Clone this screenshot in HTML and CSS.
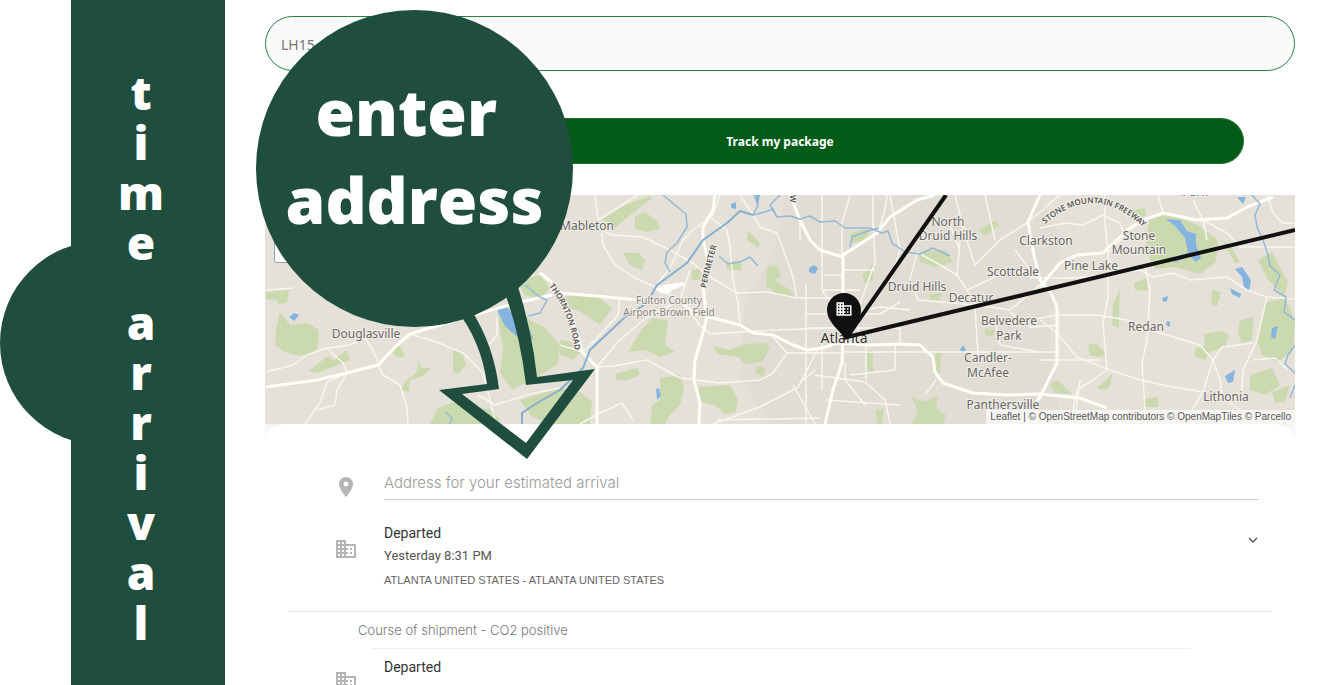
FILE: index.html
```html
<!DOCTYPE html>
<html lang="en">
<head>
  <meta charset="UTF-8" />
  <title>Time arrival | Track my package</title>
  <meta name="viewport" content="width=device-width, initial-scale=1.0" />
  <link rel="stylesheet" href="styles.css">
</head>
<body>

  <!-- Shared icons -->
  <svg class="icon-defs" aria-hidden="true">
    <symbol id="icon-building" viewBox="0 0 24 24">
      <path d="M12 7V3H2v18h20V7H12zM6 19H4v-2h2v2zm0-4H4v-2h2v2zm0-4H4V9h2v2zm0-4H4V5h2v2zm4 12H8v-2h2v2zm0-4H8v-2h2v2zm0-4H8V9h2v2zm0-4H8V5h2v2zm10 12h-8v-2h2v-2h-2v-2h2v-2h-2V9h8v10zm-2-8h-2v2h2v-2zm0 4h-2v2h2v-2z" />
    </symbol>
    <symbol id="icon-place" viewBox="0 0 24 24">
      <path d="M12 2C8.13 2 5 5.13 5 9c0 5.25 7 13 7 13s7-7.75 7-13c0-3.87-3.13-7-7-7zm0 9.5a2.5 2.5 0 0 1 0-5 2.5 2.5 0 0 1 0 5z" />
    </symbol>
  </svg>

  <div class="page">
    <!-- Vertical banner -->
    <aside class="banner">
      <div class="banner-bump"></div>
      <h1 class="banner-title">
        <span class="word"><span>t</span><span>i</span><span>m</span><span>e</span></span>
        <span class="word"><span>a</span><span>r</span><span>r</span><span>i</span><span>v</span><span>a</span><span>l</span></span>
      </h1>
    </aside>

    <main class="tracking">
      <form class="track-form">
        <input class="track-input" type="text" value="LH15" aria-label="Tracking number" />
        <button class="track-btn" type="button">Track my package</button>
      </form>

      <!-- Map -->
      <div class="map">
        <svg class="map-canvas" viewBox="265 195 1030 229" role="img" aria-label="Map of Atlanta">
          <rect class="land" x="265" y="195" width="1030" height="230" />

          <g class="city">
            <path d="M785 195H1040L1062 240L1050 330L1060 424H770L740 380L745 300L775 250Z" />
          </g>

          <g class="park">
            <path d="M266 292L289 290L287 303L278 304L276 300L266 299Z" />
            <path d="M280 312L290 325L307 323L319 330L318 347L310 356L295 355L285 352L275 345L276 330Z" />
            <path d="M309 371L328 356L334 360L346 350L350 360L330 368L318 373Z" />
            <path d="M393 348L400 346L405 355L400 358L394 355Z" />
            <path d="M405 382L417 372L418 360L422 368L431 368L423 376L410 380L409 392L401 390Z" />
            <path d="M453 350L462 352L466 365L458 374L453 372Z" />
            <path d="M430 424L437 409L452 402L470 408L490 409L500 420L480 424Z" />
            <path d="M498 308L515 303L530 320L545 328L560 345L558 364L540 375L512 390L500 372L503 350L500 330Z" />
            <path d="M520 400L560 388L580 392L592 402L590 424H548L530 415Z" />
            <path d="M515 280L540 275L550 288L540 300L525 295Z" />
            <path d="M565 296L598 297L612 308L600 325L590 318L578 310L566 308Z" />
            <path d="M560 340L572 342L580 352L574 360L560 355Z" />
            <path d="M602 219L625 205L650 196L652 198L630 215L615 228Z" />
            <path d="M635 217L645 212L658 222L660 229L646 232L635 228Z" />
            <path d="M623 253L638 253L645 260L642 270L630 265Z" />
            <path d="M640 332L652 318L668 320L665 345L675 352L660 357L645 350L628 352Z" />
            <path d="M615 374L637 368L640 375L628 380L617 380Z" />
            <path d="M660 378L680 375L684 388L680 405L670 415L665 424H650L652 405L660 400Z" />
            <path d="M698 387L730 385L738 400L736 412L725 414L715 405L700 402Z" />
            <path d="M713 346L730 350L745 344L765 343L770 348L762 362L745 364L738 357L718 354Z" />
            <path d="M756 366L765 368L764 377L756 373Z" />
            <path d="M767 267L777 265L781 276L775 280L790 290L796 298L780 296L766 286Z" />
            <path d="M725 262L740 260L742 270L728 270Z" />
            <path d="M748 230L760 243L758 248L747 240Z" />
            <path d="M692 270L701 268L700 280L692 280Z" />
            <path d="M850 233L870 228L865 240L852 243Z" />
            <path d="M918 252L945 250L953 262L935 267L920 262Z" />
            <path d="M978 230L995 221L999 225L985 236Z" />
            <path d="M862 275L873 263L873 280L865 284Z" />
            <path d="M929 294L942 293L940 300L930 300Z" />
            <path d="M866 350L873 350L873 372L866 370Z" />
            <path d="M934 355L941 350L940 375L934 370Z" />
            <path d="M912 397L925 402L938 395L936 408L946 415L944 424H912L918 412Z" />
            <path d="M876 410L884 408L882 424H877Z" />
            <path d="M1050 384L1058 380L1072 394L1055 393Z" />
            <path d="M985 328L995 330L992 337L985 335Z" />
            <path d="M1149 220L1165 215L1180 218L1198 225L1218 240L1216 262L1200 274L1175 267L1155 269L1145 250Z" />
            <path d="M1133 210L1145 208L1146 216L1138 218Z" />
            <path d="M1112 325L1113 305L1120 288L1119 318L1119 328Z" />
            <path d="M1134 283L1148 278L1147 291L1135 290Z" />
            <path d="M1088 345L1095 343L1105 352L1103 357L1090 356Z" />
            <path d="M1097 388L1113 373L1110 386L1105 390Z" />
            <path d="M1143 399L1158 397L1158 407L1144 407Z" />
            <path d="M1212 290L1221 292L1217 306L1211 304Z" />
            <path d="M1204 334L1222 331L1229 335L1225 347L1210 352L1205 360L1194 356L1196 348L1205 346Z" />
            <path d="M1240 320L1254 317L1252 340L1242 343L1238 333Z" />
            <path d="M1258 260L1272 252L1280 268L1288 282L1284 296L1268 280Z" />
            <path d="M1265 303L1285 298L1295 320L1293 350L1278 362L1262 355L1257 340Z" />
            <path d="M1250 375L1272 368L1280 385L1265 395L1250 390Z" />
            <path d="M1272 392L1290 385L1285 402L1275 403Z" />
            <path d="M1222 240L1232 248L1240 262L1235 263Z" />
          </g>

          <g class="lake">
            <path d="M289 317L294 313L299 315L294 321Z" />
            <path d="M497 310L506 306L515 317L528 326L533 338L528 344L515 335L505 326Z" />
            <path d="M656 389L659 388L661 396L657 400Z" />
            <path d="M731 204L736 202L736 209L731 208Z" />
            <path d="M755 195H760L758 205Z" />
            <path d="M809 268L814 265L818 268L815 274L809 272Z" />
            <path d="M960 350L963 345L966 350L962 353Z" />
            <path d="M1166 219L1180 220L1187 231L1196 234L1196 245L1201 258L1196 262L1190 256L1176 262L1165 260L1188 253L1185 238L1175 226Z" />
            <path d="M1235 269L1242 267L1251 280L1249 291L1244 287L1242 277Z" />
            <path d="M1230 288L1241 294L1240 298L1232 294Z" />
            <path d="M1162 298L1168 296L1167 301L1163 302Z" />
            <path d="M1167 321L1170 322L1170 327L1166 325Z" />
            <path d="M1272 328L1278 326L1275 339L1271 337Z" />
            <path d="M1225 376L1235 370L1233 382L1228 383Z" />
            <path d="M1237 197L1246 197L1243 204Z" />
          </g>

          <g class="road">
            <path d="M266 372L293 365L307 355L327 348L350 345L367 337" />
            <path d="M327 348L343 363L347 373L327 382L320 403L305 424M347 373L337 390L335 405L317 410" />
            <path d="M378 365L383 375L400 385L407 407L408 424M363 335L373 350L380 367" />
            <path d="M410 334L437 342L463 353L483 373L495 420M266 290L293 288" />
            <path d="M478 395L495 405L530 394L560 388M497 318L497 335L485 350" />
            <path d="M595 195L598 220L638 195M602 233L603 245L615 265L633 277L655 287L680 300" />
            <path d="M600 230L613 235L643 237L670 250L693 263L707 275L737 293L767 292L797 298L843 298" />
            <path d="M720 195L713 215L693 230L683 240L670 268L655 287" />
            <path d="M753 215L760 227L777 233L787 260L793 277L797 298" />
            <path d="M740 195L753 215M710 217L727 230L730 247L733 280L738 303L740 323" />
            <path d="M597 367L613 366L647 360L680 378L720 383L760 380L773 373L787 353L773 337" />
            <path d="M787 353H845M713 424L760 407L787 393L798 387L807 370L817 350" />
            <path d="M717 420L820 418M597 367L617 343L643 320L680 300M580 424L600 413L622 403L633 420" />
            <path d="M690 270L680 300L700 325L710 334L773 330L835 328M560 345L583 352L600 335L618 315L620 297" />
            <path d="M850 195L842 223V257M822 195V290L837 310M887 195L885 210L878 233" />
            <path d="M800 217V240M873 220L875 262L858 310M806 285V424M793 385L815 424" />
            <path d="M843 270H875M825 275H843M822 290H860M805 314H880L900 302M805 328H835" />
            <path d="M850 328H900V345M850 313L880 307L910 310M858 300L858 335M866 330V380" />
            <path d="M843 352H1060M822 337L822 390M815 375L865 382L885 400L890 424" />
            <path d="M845 363V380L865 405M800 383L815 370M826 400L900 405M850 375L895 370V345" />
            <path d="M890 195L900 250L890 280M873 195V230M917 252L910 280L918 300L975 305" />
            <path d="M917 252L940 265L957 275L967 290L975 305L978 355M960 240L957 275M950 225L960 250" />
            <path d="M975 265L1000 240L1027 223L1060 195M967 290L1010 270L1040 278M1015 250L1030 270" />
            <path d="M975 305L1010 310L1040 285M995 320L1000 345L1040 352M1010 312L1030 327L1060 325" />
            <path d="M955 195L965 235L975 265M985 195L995 240M936 380L925 395M1040 360H1100" />
            <path d="M1105 195V223L1108 253V297L1103 323L1107 370L1093 380L1077 390L1073 410" />
            <path d="M1040 228L1065 223L1083 225L1103 215L1120 223L1125 235L1108 253" />
            <path d="M1030 278H1077L1140 270L1153 277L1173 273L1190 280L1227 277L1247 290L1267 297L1295 299" />
            <path d="M1267 297L1257 340L1243 370L1242 390M1253 360L1275 358L1288 370" />
            <path d="M1020 325L1040 318L1057 315L1097 315L1127 320L1160 333L1200 345L1213 360L1220 380L1222 397" />
            <path d="M1213 360L1222 347L1253 343M1213 360L1203 392L1192 410" />
            <path d="M1040 320L1057 333L1077 357L1110 370L1140 380L1173 387L1203 392" />
            <path d="M1145 265L1150 290L1147 340L1142 363L1145 410M1080 380L1076 410" />
            <path d="M1203 220L1227 233L1240 247H1295M1267 195L1273 213L1283 223H1295" />
            <path d="M1193 200L1203 220L1207 240M1163 213L1158 195M1222 397L1240 410" />
          </g>

          <g class="road road-major">
            <path d="M266 387L317 380L347 373L378 365L397 345L410 334L463 318L517 303L560 293L597 296L637 300" />
            <path d="M540 273L553 283L570 313L583 353L597 367V424" />
            <path d="M680 300L693 313L713 318L740 325L753 333L773 335L793 345L807 350L823 348L837 343L870 345L900 344L920 345L933 357L935 372L943 383L973 393L1007 395L1040 394L1080 398L1107 408" />
            <path d="M715 195L713 210L703 227V240L708 260L703 287L707 317L703 333L695 360L694 380L700 403L699 424" />
            <path d="M790 195L800 220L810 240L820 250L843 257" />
            <path d="M935 195L917 200L890 217L877 233L843 255V337L842 363L833 390L825 424" />
            <path d="M1040 195L1028 222L1034 255L1040 280L1051 293L1057 307V363L1040 397L1030 410" />
            <path d="M1040 287L1060 263L1077 255L1103 253L1127 230L1143 220L1163 213L1197 220L1227 218L1247 207L1273 197" />
          </g>
          <path class="airport" d="M655 289L664 285L683 282L685 285L672 290L668 294L660 293Z" />

          <g class="river">
            <path class="river-wide" d="M753 215L740 211L727 223L703 240L687 263L657 285L647 303L625 317L590 350L583 368L560 390L537 403L522 413V424" />
            <path d="M753 215L765 212L773 209L777 217L790 216L800 219L810 216L820 222L835 221L845 228L870 228L882 233L888 231L892 243L905 252L920 254L933 248L950 256" />
            <path d="M663 195L675 205L686 214L687 227L677 243L667 252L665 263L670 272" />
            <path d="M719 256L728 264L740 262L750 257L758 266" />
            <path d="M754 195L758 205L753 215M777 217L770 205L780 195" />
            <path d="M850 247L852 237L865 232L879 228" />
            <path d="M525 285L540 297L547 300L540 313L528 316" />
            <path d="M445 412L452 418L450 424" />
            <path d="M1252 195L1260 204L1255 215L1257 227L1263 240L1268 255L1270 266L1280 275L1274 290L1286 297L1284 312L1295 320" />
            <path d="M1295 345L1288 355L1285 364L1295 373M1295 385L1290 398" />
          </g>

          <!-- place names -->
          <g class="label">
            <text x="587" y="230">Mableton</text>
            <text x="366" y="338">Douglasville</text>
            <text x="948" y="226">North</text>
            <text x="948" y="240">Druid Hills</text>
            <text x="917" y="291">Druid Hills</text>
            <text x="1013" y="276">Scottdale</text>
            <text x="1046" y="245">Clarkston</text>
            <text x="971" y="302">Decatur</text>
            <text x="1009" y="325">Belvedere</text>
            <text x="1009" y="340">Park</text>
            <text x="988" y="362">Candler-</text>
            <text x="988" y="377">McAfee</text>
            <text x="1003" y="409">Panthersville</text>
            <text x="1091" y="270">Pine Lake</text>
            <text x="1139" y="240">Stone</text>
            <text x="1139" y="254">Mountain</text>
            <text x="1146" y="331">Redan</text>
            <text x="1226" y="401">Lithonia</text>
            <text x="1195" y="196">Park</text>
            <text class="label-city" x="844" y="343">Atlanta</text>
          </g>
          <g class="label label-small">
            <text x="669" y="304">Fulton County</text>
            <text x="669" y="316">Airport-Brown Field</text>
          </g>
          <defs>
            <path id="thornton" d="M549 286Q571 315 575 352" />
            <path id="perimeter" d="M706 288Q709 272 717 245" />
            <path id="freeway" d="M1045 224Q1095 180 1145 229" />
          </defs>
          <g class="label-road">
            <text><textPath href="#thornton">THORNTON ROAD</textPath></text>
            <text><textPath href="#perimeter">PERIMETER</textPath></text>
            <text><textPath href="#freeway">STONE MOUNTAIN FREEWAY</textPath></text>
            <text x="195" y="-790" transform="rotate(90)">W</text>
          </g>

          <!-- route and marker -->
          <path class="route" d="M946 195L847 337L1295 230" />
          <path class="marker" d="M844 293C834 293 827 301 827 310C827 322 838 328 845 339C852 328 861 322 861 310C861 301 854 293 844 293Z" />
          <use class="marker-icon" href="#icon-building" x="835" y="300" width="18" height="18" />
        </svg>
        <div class="map-zoom"></div>
        <p class="attribution">
          <a href="#">Leaflet</a> | &copy; <a href="#">OpenStreetMap</a> contributors &copy; <a href="#">OpenMapTiles</a> &copy; <a href="#">Parcello</a>
        </p>
      </div>

      <!-- Shipment details -->
      <div class="sheet-wrap">
        <section class="sheet">
          <div class="row row-address">
            <svg class="row-icon"><use href="#icon-place" /></svg>
            <input class="address-input" type="text" placeholder="Address for your estimated arrival" aria-label="Address for your estimated arrival" />
          </div>

          <div class="row row-event">
            <svg class="row-icon"><use href="#icon-building" /></svg>
            <div class="event">
              <h2>Departed</h2>
              <p class="event-time">Yesterday 8:31 PM</p>
              <p class="event-place">ATLANTA UNITED STATES - ATLANTA UNITED STATES</p>
            </div>
            <button class="expand-btn" type="button" aria-label="Show details">
              <svg viewBox="0 0 10 6"><path d="M1 1L5 5L9 1" /></svg>
            </button>
          </div>

          <p class="course">Course of shipment - CO2 positive</p>

          <div class="row row-history">
            <svg class="row-icon"><use href="#icon-building" /></svg>
            <div class="event">
              <h2>Departed</h2>
            </div>
          </div>
        </section>
      </div>

      <!-- Callout bubble with arrow -->
      <div class="callout">
        <svg class="callout-shape" viewBox="256 10 340 450" aria-hidden="true">
          <circle cx="414.5" cy="168.5" r="158.5" />
          <path fill-rule="evenodd" d="M455 308Q481 340 487 384L439 390L527 459L595 369L537 377Q532 330 516 280L498 275Q519 325 526 385L573 380L526 443L462 394L499 389Q494 345 470 308Z" />
        </svg>
        <p class="callout-text">enter&nbsp;<br />address</p>
      </div>
    </main>
  </div>

</body>
</html>
```
FILE: styles.css
```css
* { box-sizing: border-box; }

body {
  margin: 0;
  background-color: white;
  font-family: Roboto, 'Liberation Sans', sans-serif;
  color: #333;
}

h1, h2, p {
  margin: 0;
}

.icon-defs {
  display: none;
}

.page {
  display: flex;
  height: 100vh;
  overflow: hidden;
  padding-left: 71px;
}

/* banner */
.banner {
  position: relative;
  flex: 0 0 154px;
  background-color: #204e3e;
  padding: 67px 14px 0 0;
}

.banner-bump {
  position: absolute;
  top: 241px;
  left: -71px;
  width: 204px;
  height: 204px;
  border-radius: 50%;
  background-color: #204e3e;
}

.banner-title {
  position: relative;
  display: flex;
  flex-direction: column;
  gap: 30px;
  color: white;
  font-family: 'Open Sans', sans-serif;
  font-size: 46px;
  font-weight: 800;
  line-height: 50px;
}

.word {
  display: flex;
  flex-direction: column;
  align-items: center;
}

/* tracking form */
.tracking {
  position: relative;
  flex: 1;
  min-width: 0;
  padding: 16px 49px 0 40px;
}

.track-form {
  display: flex;
  flex-direction: column;
}

.track-input {
  height: 55px;
  padding: 2px 15px 0;
  border: 1px solid #2c7d48;
  border-radius: 28px;
  background-color: #fafafa;
  color: #777;
  font-family: 'Noto Sans', sans-serif;
  font-size: 14px;
}

.track-btn {
  height: 46px;
  margin: 47px 51px 31px;
  border: 1px solid #1d6e2c;
  border-radius: 23px;
  background-color: #025c18;
  color: white;
  font-family: 'Noto Sans', sans-serif;
  font-size: 12px;
  font-weight: bold;
  cursor: pointer;
}

/* map */
.map {
  position: relative;
  overflow: hidden;
}

.map-canvas {
  display: block;
  width: 100%;
}

.land { fill: #e5e1d8; }
.city { fill: #e1ddd5; }
.park { fill: #cbd9af; }
.lake { fill: #86b4e0; }
.airport { fill: #fffefa; }

.road {
  fill: none;
  stroke: #f8f6ee;
  stroke-width: 1.5;
  stroke-linejoin: round;
}

.road-major {
  stroke: #fffef8;
  stroke-width: 3;
}

.river {
  fill: none;
  stroke: #94b8d6;
  stroke-width: 1.5;
  stroke-linejoin: round;
}

.river-wide {
  stroke: #86aed0;
  stroke-width: 2;
}

.label {
  fill: #666;
  stroke: #f1eee6;
  stroke-width: 2;
  paint-order: stroke;
  font-family: 'Noto Sans', sans-serif;
  font-size: 12px;
  text-anchor: middle;
}

.label-small {
  fill: #858585;
  font-size: 10px;
}

.label-city {
  fill: #333;
  font-size: 14px;
}

.label-road {
  fill: #555;
  stroke: #f1eee6;
  stroke-width: 2;
  paint-order: stroke;
  font-family: 'Noto Sans', sans-serif;
  font-size: 8px;
  font-weight: 600;
}

.route {
  fill: none;
  stroke: #111;
  stroke-width: 4;
}

.marker { fill: #111; }
.marker-icon { fill: white; }

.map-zoom {
  position: absolute;
  top: 40px;
  left: 9px;
  width: 28px;
  height: 28px;
  border: 1px solid #9aa0b4;
  border-radius: 3px;
  background-color: white;
}

.attribution {
  position: absolute;
  right: 0;
  bottom: 0;
  padding: 0 4px;
  background-color: rgba(255, 255, 255, 0.7);
  color: #555;
  font-family: 'Liberation Sans', sans-serif;
  font-size: 10px;
  line-height: 14px;
}

.attribution a {
  color: inherit;
  text-decoration: none;
}

/* shipment details */
.sheet-wrap {
  background: linear-gradient(#f4f4f4, white 20px);
}

.sheet {
  padding: 44px 23px 0;
  border-radius: 20px 20px 0 0;
  background-color: white;
}

.row {
  display: flex;
  padding-left: 46px;
}

.row-icon {
  flex: none;
  width: 24px;
  height: 24px;
  margin-right: 26px;
  fill: #b5b5b5;
}

.row-address {
  padding-right: 14px;
}

.row-address .row-icon {
  margin-top: 7px;
}

.address-input {
  flex: 1;
  min-width: 0;
  height: 32px;
  padding: 0 0 2px;
  border: none;
  border-bottom: 1px solid #ccc;
  background: none;
  font-family: Inter, sans-serif;
  font-size: 15px;
  font-weight: 300;
}

.address-input::placeholder {
  color: #999;
}

.row-event {
  padding-top: 21px;
  padding-right: 14px;
  padding-bottom: 18px;
  border-bottom: 1px solid #e8e8e8;
}

.row-event .row-icon {
  margin-top: 16px;
}

.event {
  flex: 1;
}

.event h2 {
  font-size: 14px;
  font-weight: normal;
  line-height: 24px;
}

.event-time {
  color: #555;
  font-size: 13px;
  line-height: 22px;
}

.event-place {
  color: #666;
  font-family: 'Liberation Sans', sans-serif;
  font-size: 11px;
  line-height: 26px;
}

.expand-btn {
  align-self: flex-start;
  margin-top: 16px;
  padding: 0;
  border: none;
  background: none;
  cursor: pointer;
}

.expand-btn svg {
  display: block;
  width: 10px;
  height: 6px;
  fill: none;
  stroke: #555;
  stroke-width: 1.3;
}

.course {
  margin: 0 82px 0 83px;
  padding-right: 12px;
  border-bottom: 1px solid #eee;
  color: #777;
  font-family: Inter, sans-serif;
  font-size: 13px;
  font-weight: 300;
  line-height: 36px;
  text-indent: -13px;
}

.row-history {
  padding-top: 6px;
}

.row-history .row-icon {
  margin-top: 14px;
}

/* callout */
.callout {
  position: absolute;
  top: 10px;
  left: 31px;
  width: 340px;
  pointer-events: none;
}

.callout-shape {
  display: block;
  fill: #204e3e;
}

.callout-text {
  position: absolute;
  top: 58px;
  left: 0;
  width: 317px;
  color: white;
  font-family: 'Open Sans', sans-serif;
  font-size: 64px;
  font-weight: 800;
  line-height: 88px;
  text-align: center;
}
```
